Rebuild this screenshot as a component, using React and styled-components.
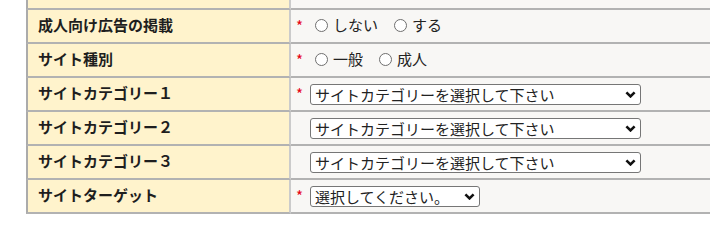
import React from 'react';
import styled, { createGlobalStyle } from 'styled-components';

const GlobalStyle = createGlobalStyle`
  html, body {
    margin: 0;
    padding: 0;
    background: #fff;
    overflow: hidden;
  }
  body {
    font-family: "Noto Sans CJK JP", "Noto Sans", sans-serif;
  }
`;

const FormTable = styled.table`
  border-collapse: separate;
  border-spacing: 0;
  table-layout: fixed;
  width: 760px;
  margin-left: 26px;
`;

const Row = styled.tr`
  height: ${(p) => (p.$cut ? '10px' : '34px')};
`;

const Label = styled.th`
  box-sizing: border-box;
  width: 265px;
  padding: 0 0 3px 10px;
  background: #fff3cc;
  border-left: 2px solid #ababab;
  border-right: 2px solid #cbcbcb;
  border-bottom: 2px solid #b2b2b2;
  text-align: left;
  vertical-align: middle;
  font-size: 15px;
  line-height: 20px;
  font-weight: bold;
  color: #1e1e1e;
  white-space: nowrap;
`;

const Value = styled.td`
  padding: 0 0 0 5px;
  background: #f8f7f5;
  border-bottom: 2px solid #b2b2b2;
  vertical-align: middle;
  font-size: 15px;
  line-height: 20px;
  color: #222;
  white-space: nowrap;
`;

const Line = styled.div`
  display: flex;
  align-items: center;
  height: 24px;
`;

const Mark = styled.span`
  display: inline-block;
  width: 14px;
  flex: none;
  color: #e60012;
  font-size: 15px;
  line-height: 15px;
  margin-top: -2px;
  visibility: ${(p) => (p.$off ? 'hidden' : 'visible')};
`;

const Option = styled.label`
  display: inline-flex;
  align-items: center;
  margin-right: 11px;
  padding-bottom: 2px;
`;

const Radio = styled.input`
  appearance: none;
  flex: none;
  box-sizing: border-box;
  width: 13px;
  height: 13px;
  margin: 1px 5px 0 5px;
  border: 1px solid #6f6f6f;
  border-radius: 50%;
  background: #fff;
`;

const SelectWrap = styled.span`
  position: relative;
  display: inline-block;
  width: ${(p) => p.$w}px;
  height: 21px;
`;

const Select = styled.select`
  appearance: none;
  box-sizing: border-box;
  display: block;
  width: 100%;
  height: 21px;
  padding: 0 0 1px 4px;
  font-family: inherit;
  font-size: 15px;
  line-height: 19px;
  color: #222;
  background: #fff;
  border: 1px solid #767676;
  border-radius: 3px;
`;

const Chevron = styled.svg`
  position: absolute;
  right: 5px;
  top: 7px;
  width: 11px;
  height: 7px;
  pointer-events: none;
`;

const rows = [
  { label: '成人向け広告の掲載', req: true, radios: ['しない', 'する'], name: 'ad' },
  { label: 'サイト種別', req: true, radios: ['一般', '成人'], name: 'kind' },
  { label: 'サイトカテゴリー１', req: true, select: 'サイトカテゴリーを選択して下さい', w: 331 },
  { label: 'サイトカテゴリー２', req: false, select: 'サイトカテゴリーを選択して下さい', w: 331 },
  { label: 'サイトカテゴリー３', req: false, select: 'サイトカテゴリーを選択して下さい', w: 331 },
  { label: 'サイトターゲット', req: true, select: '選択してください。', w: 170 },
];

export default function App() {
  return (
    <>
      <GlobalStyle />
      <FormTable>
        <tbody>
          <Row $cut>
            <Label />
            <Value />
          </Row>
          {rows.map((r) => (
            <Row key={r.label}>
              <Label>{r.label}</Label>
              <Value>
                <Line>
                  <Mark $off={!r.req}>*</Mark>
                  {r.radios
                    ? r.radios.map((t) => (
                        <Option key={t}>
                          <Radio type="radio" name={r.name} />
                          {t}
                        </Option>
                      ))
                    : (
                      <SelectWrap $w={r.w}>
                        <Select defaultValue="">
                          <option value="">{r.select}</option>
                        </Select>
                        <Chevron viewBox="0 0 11 7">
                          <path d="M1.4 1.4 L5.5 5.4 L9.6 1.4" fill="none" stroke="#111" strokeWidth="2.6" />
                        </Chevron>
                      </SelectWrap>
                    )}
                </Line>
              </Value>
            </Row>
          ))}
        </tbody>
      </FormTable>
    </>
  );
}
